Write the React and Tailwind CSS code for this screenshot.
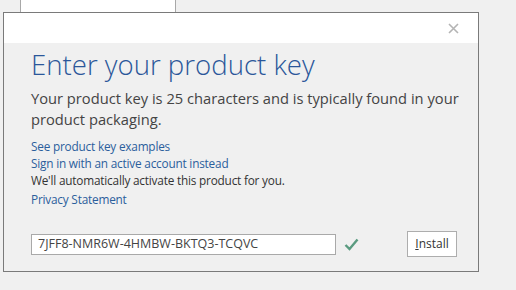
import React from "react";

export default function App() {
  const font = { fontFamily: '"Open Sans", "Noto Sans", sans-serif' };
  return (
    <div className="w-[516px] h-[290px] bg-[#f0f0f0] overflow-hidden" style={font}>
      <div className="ml-[20px] w-[156px] h-[12px] bg-white border-x border-[#a8a8a8]" />
      <div className="ml-[3px] w-[476px] h-[260px] border border-[#7a7a7a] bg-[#f0f0f0] flex flex-col">
        <div className="h-[30px] bg-white flex items-center justify-end pr-[19px]">
          <svg width="11" height="11" viewBox="0 0 11 11">
            <path d="M1 1 L10 10 M10 1 L1 10" stroke="#b4b4b4" strokeWidth="1.6" />
          </svg>
        </div>
        <div className="pl-[27px] pr-[6px] flex flex-col">
          <div className="mt-[1px] text-[27.6px] leading-[40px] font-light text-[#2b579a]">Enter your product key</div>
          <div className="mt-[4px] text-[14.7px] leading-[21px] text-[#444444]">
            Your product key is 25 characters and is typically found in your product packaging.
          </div>
          <div className="mt-[8px] flex flex-col text-[11.8px] leading-[17px] tracking-[-0.2px]">
            <span className="text-[#2b5e9c]">See product key examples</span>
            <span className="text-[#2b5e9c]">Sign in with an active account instead</span>
            <span className="text-[#333333]">We'll automatically activate this product for you.</span>
            <span className="mt-[2px] text-[#2b5e9c]">Privacy Statement</span>
          </div>
          <div className="mt-[23px] flex items-center">
            <div className="w-[305px] h-[21px] bg-white border border-[#a9a9a9] flex items-center pl-[6px] text-[12.5px] text-[#444444]">
              7JFF8-NMR6W-4HMBW-BKTQ3-TCQVC
            </div>
            <svg className="ml-[8px]" width="15" height="13" viewBox="0 0 15 13">
              <path d="M1.5 7 L5.5 11 L13.5 1.5" fill="none" stroke="#5a9b80" strokeWidth="2.4" />
            </svg>
            <div className="ml-[48px] w-[50px] h-[26px] bg-white border border-[#adadad] flex items-center justify-center text-[12px] text-[#333333]">
              <span><span className="underline">I</span>nstall</span>
            </div>
          </div>
        </div>
      </div>
    </div>
  );
}
